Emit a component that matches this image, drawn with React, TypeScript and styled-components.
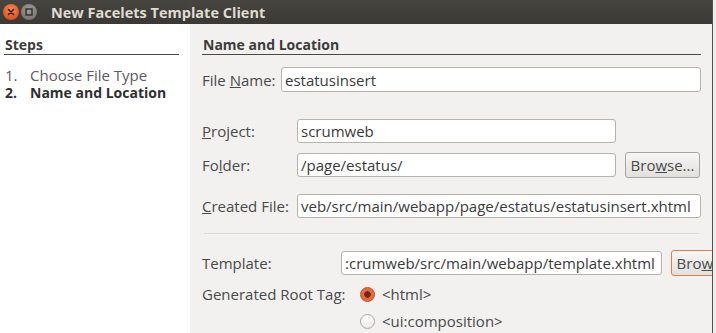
import React from "react"
import styled, { createGlobalStyle } from "styled-components"

const GlobalStyle = createGlobalStyle`
  html, body {
    margin: 0;
    padding: 0;
    background: #efeeec;
    overflow: hidden;
  }
  body {
    font-family: "Open Sans", "DejaVu Sans", sans-serif;
    font-size: 15px;
    color: #3c3c3c;
  }
`

const App = (): JSX.Element => {
  return (
    <>
      <GlobalStyle />
      <StyledWindow>
        <StyledTitleBar>
          <StyledWindowButton variant="close">
            <svg width="16" height="16" viewBox="0 0 16 16">
              <path d="M5.5 5.5 L10.5 10.5 M10.5 5.5 L5.5 10.5" stroke="#3a1a0c" strokeWidth="1.6" strokeLinecap="round" />
            </svg>
          </StyledWindowButton>
          <StyledWindowButton variant="max">
            <svg width="16" height="16" viewBox="0 0 16 16">
              <rect x="5" y="5" width="6" height="6" fill="none" stroke="#2e2d2a" strokeWidth="1.4" />
            </svg>
          </StyledWindowButton>
          <StyledTitle>New Facelets Template Client</StyledTitle>
        </StyledTitleBar>

        <StyledBody>
          <StyledSteps>
            <StyledSectionHeader>Steps</StyledSectionHeader>
            <StyledStepList>
              <StyledStep>
                <span>1.</span>
                Choose File Type
              </StyledStep>
              <StyledStep active>
                <span>2.</span>
                Name and Location
              </StyledStep>
            </StyledStepList>
          </StyledSteps>

          <StyledPanel>
            <StyledSectionHeader>Name and Location</StyledSectionHeader>

            <StyledRow top={12} height={25}>
              <StyledLabel width={79}>File <u>N</u>ame:</StyledLabel>
              <StyledField>estatusinsert</StyledField>
            </StyledRow>

            <StyledRow top={27} height={24}>
              <StyledLabel width={95}><u>P</u>roject:</StyledLabel>
              <StyledField fixed={319}>scrumweb</StyledField>
            </StyledRow>

            <StyledRow top={9} height={26}>
              <StyledLabel width={95}>Fo<u>l</u>der:</StyledLabel>
              <StyledField fixed={319} inset>/page/estatus/</StyledField>
              <StyledButton>Bro<u>w</u>se...</StyledButton>
            </StyledRow>

            <StyledRow top={16} height={24}>
              <StyledLabel width={95}><u>C</u>reated File:</StyledLabel>
              <StyledField>veb/src/main/webapp/page/estatus/estatusinsert.xhtml</StyledField>
            </StyledRow>

            <StyledSeparator />

            <StyledRow top={16} height={26}>
              <StyledLabel width={139}>Template:</StyledLabel>
              <StyledField fixed={321} inset>:crumweb/src/main/webapp/template.xhtml</StyledField>
              <StyledButton focused>Bro<u>w</u>se...</StyledButton>
            </StyledRow>

            <StyledRow top={7} height={22}>
              <StyledLabel width={158}>Generated Root Tag:</StyledLabel>
              <StyledRadio checked />
              <StyledRadioText>&lt;html&gt;</StyledRadioText>
            </StyledRow>

            <StyledRow top={5} height={22}>
              <StyledLabel width={158} />
              <StyledRadio />
              <StyledRadioText>&lt;ui:composition&gt;</StyledRadioText>
            </StyledRow>
          </StyledPanel>
        </StyledBody>
      </StyledWindow>
    </>
  )
}

const StyledWindow = styled.div`
    width: 712px;
    height: 333px;
    display: flex;
    flex-direction: column;
    border-right: 1px solid #55534e;
    background: #f2f1f0;
    overflow: hidden;
`;

const StyledTitleBar = styled.div`
    height: 24px;
    flex: 0 0 24px;
    display: flex;
    align-items: center;
    padding-left: 3px;
    background: linear-gradient(#46453f, #3a3935);
`;

const StyledWindowButton = styled.div<{ variant: string }>`
    width: 16px;
    height: 16px;
    border-radius: 8px;
    margin-right: 2px;
    display: flex;
    background: ${props => props.variant === "close"
        ? "radial-gradient(circle at 50% 35%, #f88a5e, #e0541f 70%, #b8421a)"
        : "radial-gradient(circle at 50% 35%, #9e9c96, #7b7a74 70%, #5f5e59)"};
`;

const StyledTitle = styled.div`
    margin-left: 12px;
    font-weight: bold;
    font-size: 14.5px;
    color: #dfdbd2;
`;

const StyledBody = styled.div`
    flex: 1;
    display: grid;
    grid-template-columns: 190px 1fr;
    min-height: 0;
`;

const StyledSteps = styled.div`
    background: #ffffff;
    padding: 12px 11px 0 4px;
`;

const StyledSectionHeader = styled.div`
    height: 18px;
    line-height: 18px;
    font-weight: bold;
    font-size: 14px;
    color: #3c3c3c;
    padding-left: 1px;
    border-bottom: 1px solid #4a4946;
`;

const StyledStepList = styled.div`
    margin-top: 11px;
`;

const StyledStep = styled.div<{ active?: boolean }>`
    height: 18px;
    line-height: 18px;
    padding-left: 1px;
    font-size: ${props => props.active ? "14px" : "15px"};
    font-weight: ${props => props.active ? "bold" : "normal"};
    color: ${props => props.active ? "#2f2f2f" : "#5e5a66"};

    span {
        display: inline-block;
        width: 25px;
    }
`;

const StyledPanel = styled.div`
    padding: 12px 11px 0 12px;
    overflow: hidden;
    min-width: 0;
`;

const StyledRow = styled.div<{ top: number; height: number }>`
    display: flex;
    align-items: center;
    margin-top: ${props => props.top}px;
    height: ${props => props.height}px;
`;

const StyledLabel = styled.div<{ width: number }>`
    flex: 0 0 ${props => props.width}px;
    font-size: 15px;
    color: #4a4a4a;
    white-space: nowrap;
`;

const StyledField = styled.div<{ fixed?: number; inset?: boolean }>`
    flex: ${props => props.fixed ? `0 0 ${props.fixed}px` : "1"};
    height: ${props => props.inset ? "24px" : "100%"};
    box-sizing: border-box;
    border: 1px solid #b6b2ac;
    border-radius: 3px;
    background: #ffffff;
    padding: 0 3px;
    display: flex;
    align-items: center;
    font-size: 15px;
    color: #3a3a3a;
    white-space: nowrap;
    overflow: hidden;
`;

const StyledButton = styled.div<{ focused?: boolean }>`
    flex: 0 0 75px;
    height: 26px;
    box-sizing: border-box;
    margin-left: 9px;
    border: 1px solid ${props => props.focused ? "#e8794c" : "#a9a6a0"};
    border-radius: 3px;
    background: linear-gradient(#f7f6f5, #e2e0dc);
    display: flex;
    align-items: center;
    justify-content: center;
    font-size: 15px;
    color: #4a4a4a;
    white-space: nowrap;
`;

const StyledSeparator = styled.div`
    margin: 15px 2px 0 2px;
    height: 1px;
    background: #dcdad6;
`;

const StyledRadio = styled.div<{ checked?: boolean }>`
    width: 15px;
    height: 15px;
    box-sizing: border-box;
    border-radius: 50%;
    border: 1px solid ${props => props.checked ? "#c24e22" : "#a8a5a0"};
    background: ${props => props.checked
        ? "radial-gradient(circle, #6e2a10 0 3px, #e86a3a 3.5px)"
        : "linear-gradient(#ffffff, #ecebe9)"};
`;

const StyledRadioText = styled.div`
    margin-left: 7px;
    font-size: 15px;
    color: #4a4a4a;
`;

export default App
